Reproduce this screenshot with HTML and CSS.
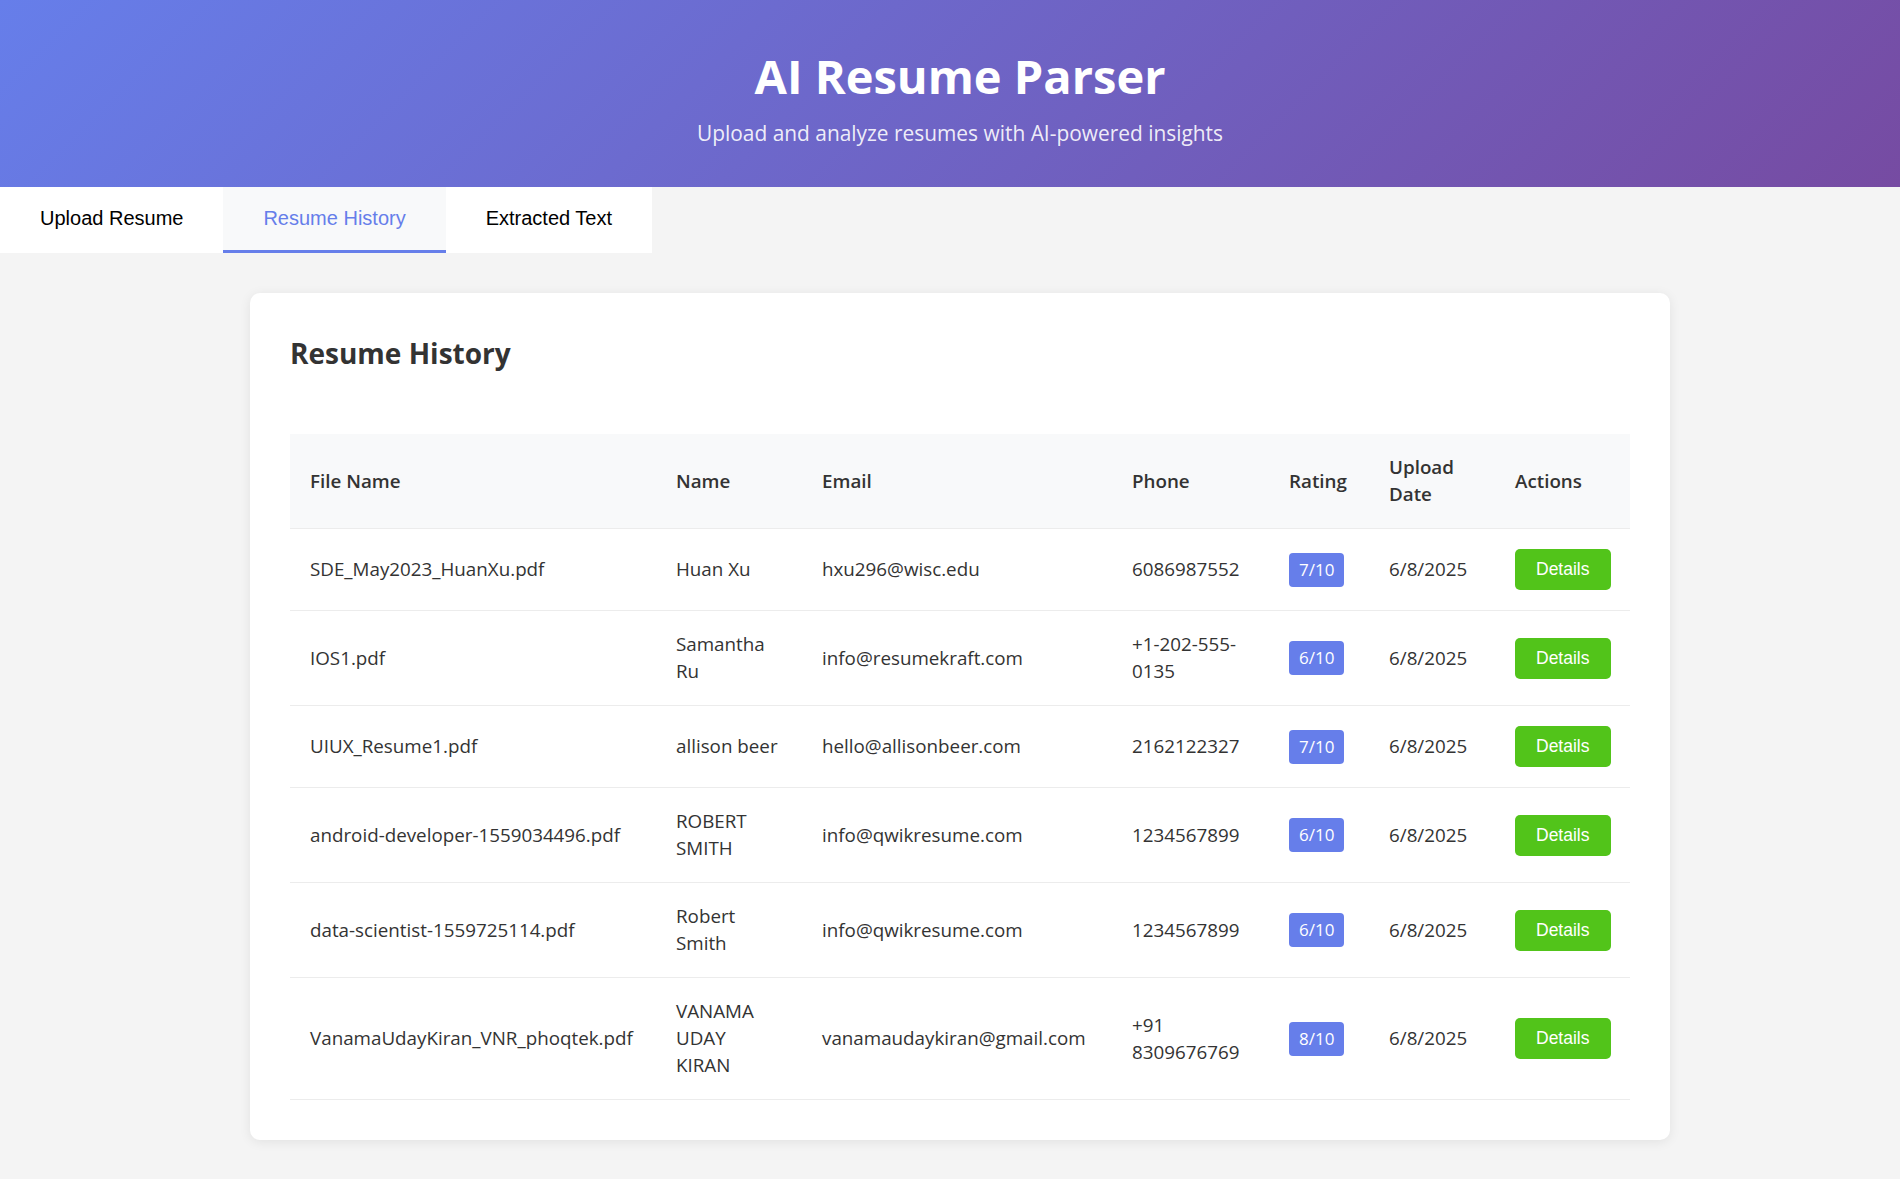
FILE: index.html
```html
<!DOCTYPE html>
<html lang="en">
<head>
<meta charset="utf-8">
<title>AI Resume Parser</title>
<link rel="stylesheet" href="styles.css">
</head>
<body>
<header class="hero">
  <h1 class="hero-title">AI Resume Parser</h1>
  <p class="hero-sub">Upload and analyze resumes with AI-powered insights</p>
</header>
<nav class="tabs">
  <button class="tab">Upload Resume</button>
  <button class="tab tab-active">Resume History</button>
  <button class="tab">Extracted Text</button>
</nav>
<main class="main">
  <section class="card">
    <h2 class="card-title">Resume History</h2>
    <table class="history">
      <colgroup>
        <col class="c-file"><col class="c-name"><col class="c-email"><col class="c-phone"><col class="c-rating"><col class="c-date"><col class="c-actions">
      </colgroup>
      <thead>
        <tr><th>File Name</th><th>Name</th><th>Email</th><th>Phone</th><th>Rating</th><th>Upload Date</th><th>Actions</th></tr>
      </thead>
      <tbody>
        <tr><td>SDE_May2023_HuanXu.pdf</td><td>Huan Xu</td><td>hxu296@wisc.edu</td><td>6086987552</td><td><span class="badge">7/10</span></td><td>6/8/2025</td><td><button class="btn-details">Details</button></td></tr>
        <tr><td>IOS1.pdf</td><td>Samantha Ru</td><td>info@resumekraft.com</td><td>+1-202-555-0135</td><td><span class="badge">6/10</span></td><td>6/8/2025</td><td><button class="btn-details">Details</button></td></tr>
        <tr><td>UIUX_Resume1.pdf</td><td>allison beer</td><td>hello@allisonbeer.com</td><td>2162122327</td><td><span class="badge">7/10</span></td><td>6/8/2025</td><td><button class="btn-details">Details</button></td></tr>
        <tr><td>android-developer-1559034496.pdf</td><td>ROBERT SMITH</td><td>info@qwikresume.com</td><td>1234567899</td><td><span class="badge">6/10</span></td><td>6/8/2025</td><td><button class="btn-details">Details</button></td></tr>
        <tr><td>data-scientist-1559725114.pdf</td><td>Robert Smith</td><td>info@qwikresume.com</td><td>1234567899</td><td><span class="badge">6/10</span></td><td>6/8/2025</td><td><button class="btn-details">Details</button></td></tr>
        <tr><td>VanamaUdayKiran_VNR_phoqtek.pdf</td><td>VANAMA UDAY KIRAN</td><td>vanamaudaykiran@gmail.com</td><td>+91 8309676769</td><td><span class="badge">8/10</span></td><td>6/8/2025</td><td><button class="btn-details">Details</button></td></tr>
      </tbody>
    </table>
  </section>
</main>
</body>
</html>
```

FILE: styles.css
```css
* { box-sizing: border-box; }

html, body {
  margin: 0;
  padding: 0;
}

body {
  background: #f4f4f4;
  font-family: "Open Sans", "Noto Sans", sans-serif;
  color: #333;
}

.hero {
  background: linear-gradient(135deg, #667eea 0%, #764ba2 100%);
  color: #fff;
  text-align: center;
  padding: 48px 0 39px 20px;
}

.hero-title {
  margin: 0 0 14px;
  font-size: 47px;
  line-height: 56px;
  font-weight: 700;
}

.hero-sub {
  margin: 0;
  font-size: 20.9px;
  line-height: 30px;
  color: rgba(255, 255, 255, 0.9);
}

.tabs {
  display: flex;
}

.tab {
  font-family: "Liberation Sans", Arial, sans-serif;
  font-size: 20px;
  line-height: 23px;
  padding: 20px 40px;
  border: none;
  border-bottom: 3px solid transparent;
  background: #fff;
  color: #000;
  cursor: pointer;
  margin: 0;
}

.tab-active {
  color: #667eea;
  background: #f8f9fa;
  border-bottom-color: #667eea;
}

.main {
  display: flex;
  justify-content: center;
  padding: 40px 0 30px 20px;
}

.card {
  width: 1420px;
  background: #fff;
  border-radius: 10px;
  box-shadow: 0 2px 12px rgba(0, 0, 0, 0.08);
  padding: 40px;
}

.card-title {
  margin: 0 0 61px;
  font-size: 28px;
  line-height: 40px;
  font-weight: 700;
  color: #333;
}

.history {
  width: 1340px;
  table-layout: fixed;
  border-collapse: collapse;
  font-size: 18.8px;
  line-height: 27px;
}

.c-file { width: 366px; }
.c-name { width: 146px; }
.c-email { width: 310px; }
.c-phone { width: 157px; }
.c-rating { width: 100px; }
.c-date { width: 126px; }
.c-actions { width: 135px; }

.history th,
.history td {
  padding: 20px;
  text-align: left;
  vertical-align: middle;
  border-bottom: 1px solid #ececec;
}

.history th {
  background: #f8f9fa;
  font-weight: 600;
  color: #333;
}

.history td {
  color: #333;
}

.badge {
  display: inline-block;
  background: #667eea;
  color: #fff;
  font-size: 17px;
  line-height: 24px;
  padding: 5px 10px;
  border-radius: 4px;
}

.btn-details {
  font-family: "Liberation Sans", Arial, sans-serif;
  font-size: 17.5px;
  line-height: 21px;
  padding: 10px 21px;
  border: none;
  border-radius: 5px;
  background: #52c41a;
  color: #fff;
  cursor: pointer;
}
```
